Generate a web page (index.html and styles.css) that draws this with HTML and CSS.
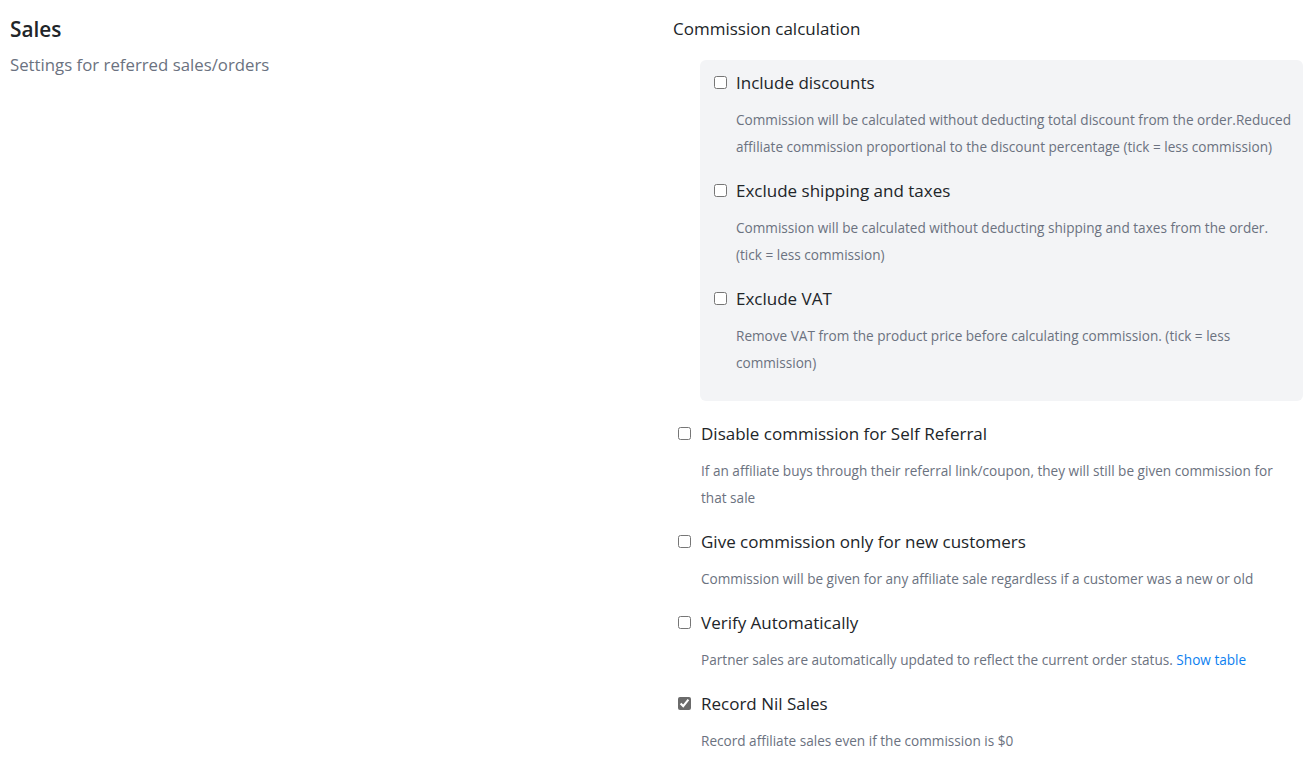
FILE: index.html
```html
<!DOCTYPE html>
<html lang="en">
<head>
<meta charset="utf-8">
<title>Sales settings</title>
<link rel="stylesheet" href="styles.css">
</head>
<body>
<div class="page">
  <div class="intro">
    <h2 class="title">Sales</h2>
    <p class="subtitle">Settings for referred sales/orders</p>
  </div>
  <div class="settings">
    <div class="group-title">Commission calculation</div>
    <div class="box">
      <div class="item">
        <label class="check"><input type="checkbox"><span>Include discounts</span></label>
        <p class="desc">Commission will be calculated without deducting total discount from the order.Reduced affiliate commission proportional to the discount percentage (tick = less commission)</p>
      </div>
      <div class="item">
        <label class="check"><input type="checkbox"><span>Exclude shipping and taxes</span></label>
        <p class="desc">Commission will be calculated without deducting shipping and taxes from the order. (tick = less commission)</p>
      </div>
      <div class="item">
        <label class="check"><input type="checkbox"><span>Exclude VAT</span></label>
        <p class="desc">Remove VAT from the product price before calculating commission. (tick = less commission)</p>
      </div>
    </div>
    <div class="item outer">
      <label class="check"><input type="checkbox"><span>Disable commission for Self Referral</span></label>
      <p class="desc">If an affiliate buys through their referral link/coupon, they will still be given commission for that sale</p>
    </div>
    <div class="item outer">
      <label class="check"><input type="checkbox"><span>Give commission only for new customers</span></label>
      <p class="desc">Commission will be given for any affiliate sale regardless if a customer was a new or old</p>
    </div>
    <div class="item outer">
      <label class="check"><input type="checkbox"><span>Verify Automatically</span></label>
      <p class="desc">Partner sales are automatically updated to reflect the current order status. <a href="#" class="link">Show table</a></p>
    </div>
    <div class="item outer">
      <label class="check"><input type="checkbox" checked><span>Record Nil Sales</span></label>
      <p class="desc">Record affiliate sales even if the commission is $0</p>
    </div>
  </div>
</div>
</body>
</html>
```

FILE: styles.css
```css
* { box-sizing: border-box; }
html, body { margin: 0; padding: 0; background: #fff; }
body {
  font-family: "Open Sans", "Noto Sans", sans-serif;
  color: #212529;
}
.page {
  display: flex;
  padding: 16px 10px 0 10px;
}
.intro {
  width: 663px;
  flex: none;
}
.title {
  margin: 0;
  font-size: 20.8px;
  line-height: 26px;
  font-weight: 600;
  color: #212529;
}
.subtitle {
  margin: 11px 0 0;
  font-size: 16.8px;
  line-height: 24px;
  color: #6b7280;
}
.settings {
  flex: 1;
  min-width: 0;
}
.group-title {
  font-size: 17px;
  line-height: 26px;
  color: #212529;
}
.box {
  margin: 18px 0 20px 27px;
  background: #f3f4f6;
  border-radius: 6px;
  padding: 10px 6px 7px 14px;
}
.item {
  margin-bottom: 18px;
}
.check {
  display: flex;
  align-items: center;
  height: 24px;
  font-size: 17px;
  color: #212529;
}
.check input {
  margin: 0 9px 0 0;
  width: 13px;
  height: 13px;
  accent-color: #6b6b6b;
  flex: none;
}
.desc {
  margin: 12px 0 0 22px;
  font-size: 13.6px;
  line-height: 27px;
  color: #6b7280;
}
.outer {
  margin-left: 5px;
}
.outer .check input {
  margin-right: 10px;
}
.outer .desc {
  margin-left: 23px;
  padding-right: 8px;
}
.link {
  color: #0d7ff0;
  text-decoration: none;
}
```
